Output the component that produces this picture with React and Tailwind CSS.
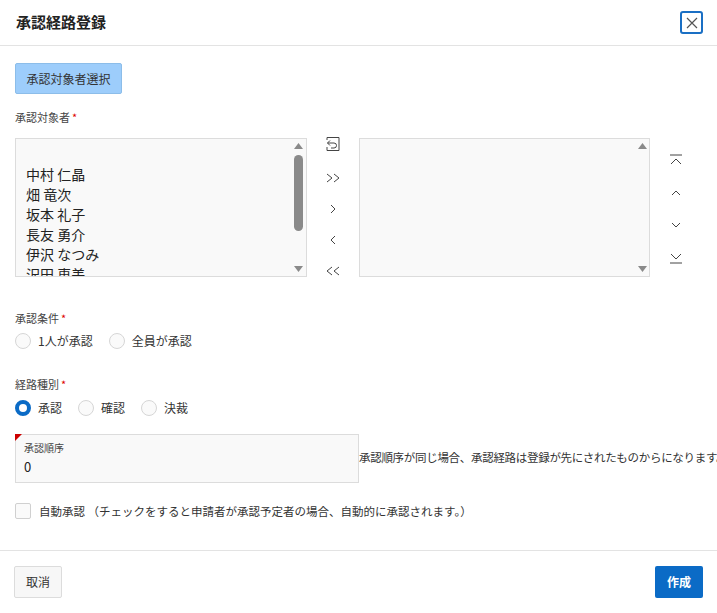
import React from "react";

const F = { fontFamily: '"Noto Sans CJK JP", "Liberation Sans", sans-serif' };

function Radio({ checked, label }) {
  return (
    <label className="flex items-center gap-[7px] mr-[16px]">
      {checked ? (
        <span className="w-[16px] h-[16px] rounded-full border-[4px] border-[#0b6bc6] bg-white" />
      ) : (
        <span className="w-[16px] h-[16px] rounded-full border border-[#d6d6d6] bg-[#fafafa]" />
      )}
      <span className="text-[12px] text-[#333]">{label}</span>
    </label>
  );
}

function Scroll({ thumb }) {
  return (
    <div className="w-[14px] flex flex-col items-center justify-between py-[4px]">
      <svg width="9" height="6" viewBox="0 0 9 6"><path d="M0 6L4.5 0L9 6Z" fill="#8a8a8a" /></svg>
      <div className="flex-1 flex flex-col items-center pt-[6px]">
        {thumb && <div className="w-[9px] h-[76px] rounded-full bg-[#8a8a8a]" />}
      </div>
      <svg width="9" height="6" viewBox="0 0 9 6"><path d="M0 0L9 0L4.5 6Z" fill="#8a8a8a" /></svg>
    </div>
  );
}

const st = { fill: "none", stroke: "#444", strokeWidth: 1 };

export default function App() {
  const names = ["中村 仁晶", "畑 竜次", "坂本 礼子", "長友 勇介", "伊沢 なつみ", "沢田 恵美"];
  return (
    <div style={F} className="w-[717px] h-[613px] bg-white flex flex-col text-[#333]">
      <div className="h-[46px] flex items-center justify-between pl-[16px] pr-[14px] border-b border-[#e3e3e3]">
        <div className="text-[15px] font-bold text-[#222]">承認経路登録</div>
        <div className="w-[23px] h-[23px] border-2 border-[#1a6fc4] rounded-[3px] flex items-center justify-center">
          <svg width="12" height="12" viewBox="0 0 12 12"><path d="M1 1L11 11M11 1L1 11" stroke="#555" strokeWidth="1.2" /></svg>
        </div>
      </div>
      <div className="flex-1 px-[15px] pt-[17px]">
        <div className="w-[107px] h-[31px] bg-[#9dcdfb] border border-[#8cbde9] rounded-[2px] flex items-center justify-center text-[12px] text-[#333]">承認対象者選択</div>
        <div className="mt-[15px] text-[11px] text-[#444]">承認対象者<span className="text-[#d00] ml-[2px]">*</span></div>
        <div className="mt-[12px] flex">
          <div className="w-[292px] h-[139px] border border-[#dcdcdc] bg-[#f9f9f9] flex overflow-hidden">
            <div className="flex-1 pl-[10px] pt-[25px] text-[14px] leading-[20px] text-[#222]">
              {names.map((n) => <div key={n}>{n}</div>)}
            </div>
            <Scroll thumb />
          </div>
          <div className="w-[52px] flex flex-col items-center justify-between py-[0px] h-[139px]">
            <svg width="16" height="16" viewBox="0 0 16 16" className="mt-[-2px]"><path d="M2 4V1.5H14V14.5H2V11" {...st} /><path d="M5 4.5L2.5 7L5 9.5" {...st}/><path d="M2.5 7H9a2.5 2.5 0 010 5H6" {...st}/></svg>
            <svg width="14" height="10" viewBox="0 0 14 10"><path d="M1 1L6 5L1 9M8 1L13 5L8 9" {...st} /></svg>
            <svg width="8" height="10" viewBox="0 0 8 10"><path d="M2 1L6 5L2 9" {...st} /></svg>
            <svg width="8" height="10" viewBox="0 0 8 10"><path d="M6 1L2 5L6 9" {...st} /></svg>
            <svg width="14" height="10" viewBox="0 0 14 10" className="mb-[1px]"><path d="M6 1L1 5L6 9M13 1L8 5L13 9" {...st} /></svg>
          </div>
          <div className="w-[292px] h-[139px] border border-[#dcdcdc] bg-[#f9f9f9] flex">
            <div className="flex-1" />
            <Scroll />
          </div>
          <div className="w-[52px] flex flex-col items-center pt-[16px] gap-[18px]">
            <svg width="14" height="14" viewBox="0 0 14 14"><path d="M1 1H13M2 10L7 5L12 10" {...st} /></svg>
            <svg width="14" height="14" viewBox="0 0 14 14"><path d="M3 9L7 5L11 9" {...st} /></svg>
            <svg width="14" height="14" viewBox="0 0 14 14"><path d="M3 5L7 9L11 5" {...st} /></svg>
            <svg width="14" height="14" viewBox="0 0 14 14"><path d="M2 4L7 9L12 4M1 13H13" {...st} /></svg>
          </div>
        </div>
        <div className="mt-[33px] text-[11px] text-[#444]">承認条件<span className="text-[#d00] ml-[2px]">*</span></div>
        <div className="mt-[6px] flex"><Radio label="1人が承認" /><Radio label="全員が承認" /></div>
        <div className="mt-[26px] text-[11px] text-[#444]">経路種別<span className="text-[#d00] ml-[2px]">*</span></div>
        <div className="mt-[6px] flex"><Radio checked label="承認" /><Radio label="確認" /><Radio label="決裁" /></div>
        <div className="mt-[17px] flex items-center">
          <div className="relative shrink-0 w-[344px] h-[49px] border border-[#dcdcdc] bg-[#f9f9f9] px-[8px] pt-[6px]">
            <div className="absolute left-[-1px] top-[-1px] w-0 h-0 border-t-[7px] border-r-[7px] border-t-[#c00] border-r-transparent" />
            <div className="text-[10px] leading-[14px] text-[#444]">承認順序</div>
            <div className="text-[13px] leading-[20px] text-[#222] mt-[2px]">0</div>
          </div>
          <div className="text-[11.5px] text-[#333] whitespace-nowrap tracking-[-0.3px]">承認順序が同じ場合、承認経路は登録が先にされたものからになります。</div>
        </div>
        <div className="mt-[20px] flex items-center gap-[8px]">
          <span className="w-[16px] h-[16px] border border-[#d0d0d0] rounded-[2px] bg-[#fafafa]" />
          <span className="text-[11.5px] text-[#333]">自動承認 （チェックをすると申請者が承認予定者の場合、自動的に承認されます。）</span>
        </div>
      </div>
      <div className="h-[63px] border-t border-[#e3e3e3] flex items-center justify-between px-[14px]">
        <div className="w-[48px] h-[32px] border border-[#dcdcdc] bg-[#f7f7f7] rounded-[2px] flex items-center justify-center text-[12px] text-[#333]">取消</div>
        <div className="w-[48px] h-[32px] bg-[#0b6bc6] rounded-[2px] flex items-center justify-center text-[12px] font-bold text-white">作成</div>
      </div>
    </div>
  );
}
